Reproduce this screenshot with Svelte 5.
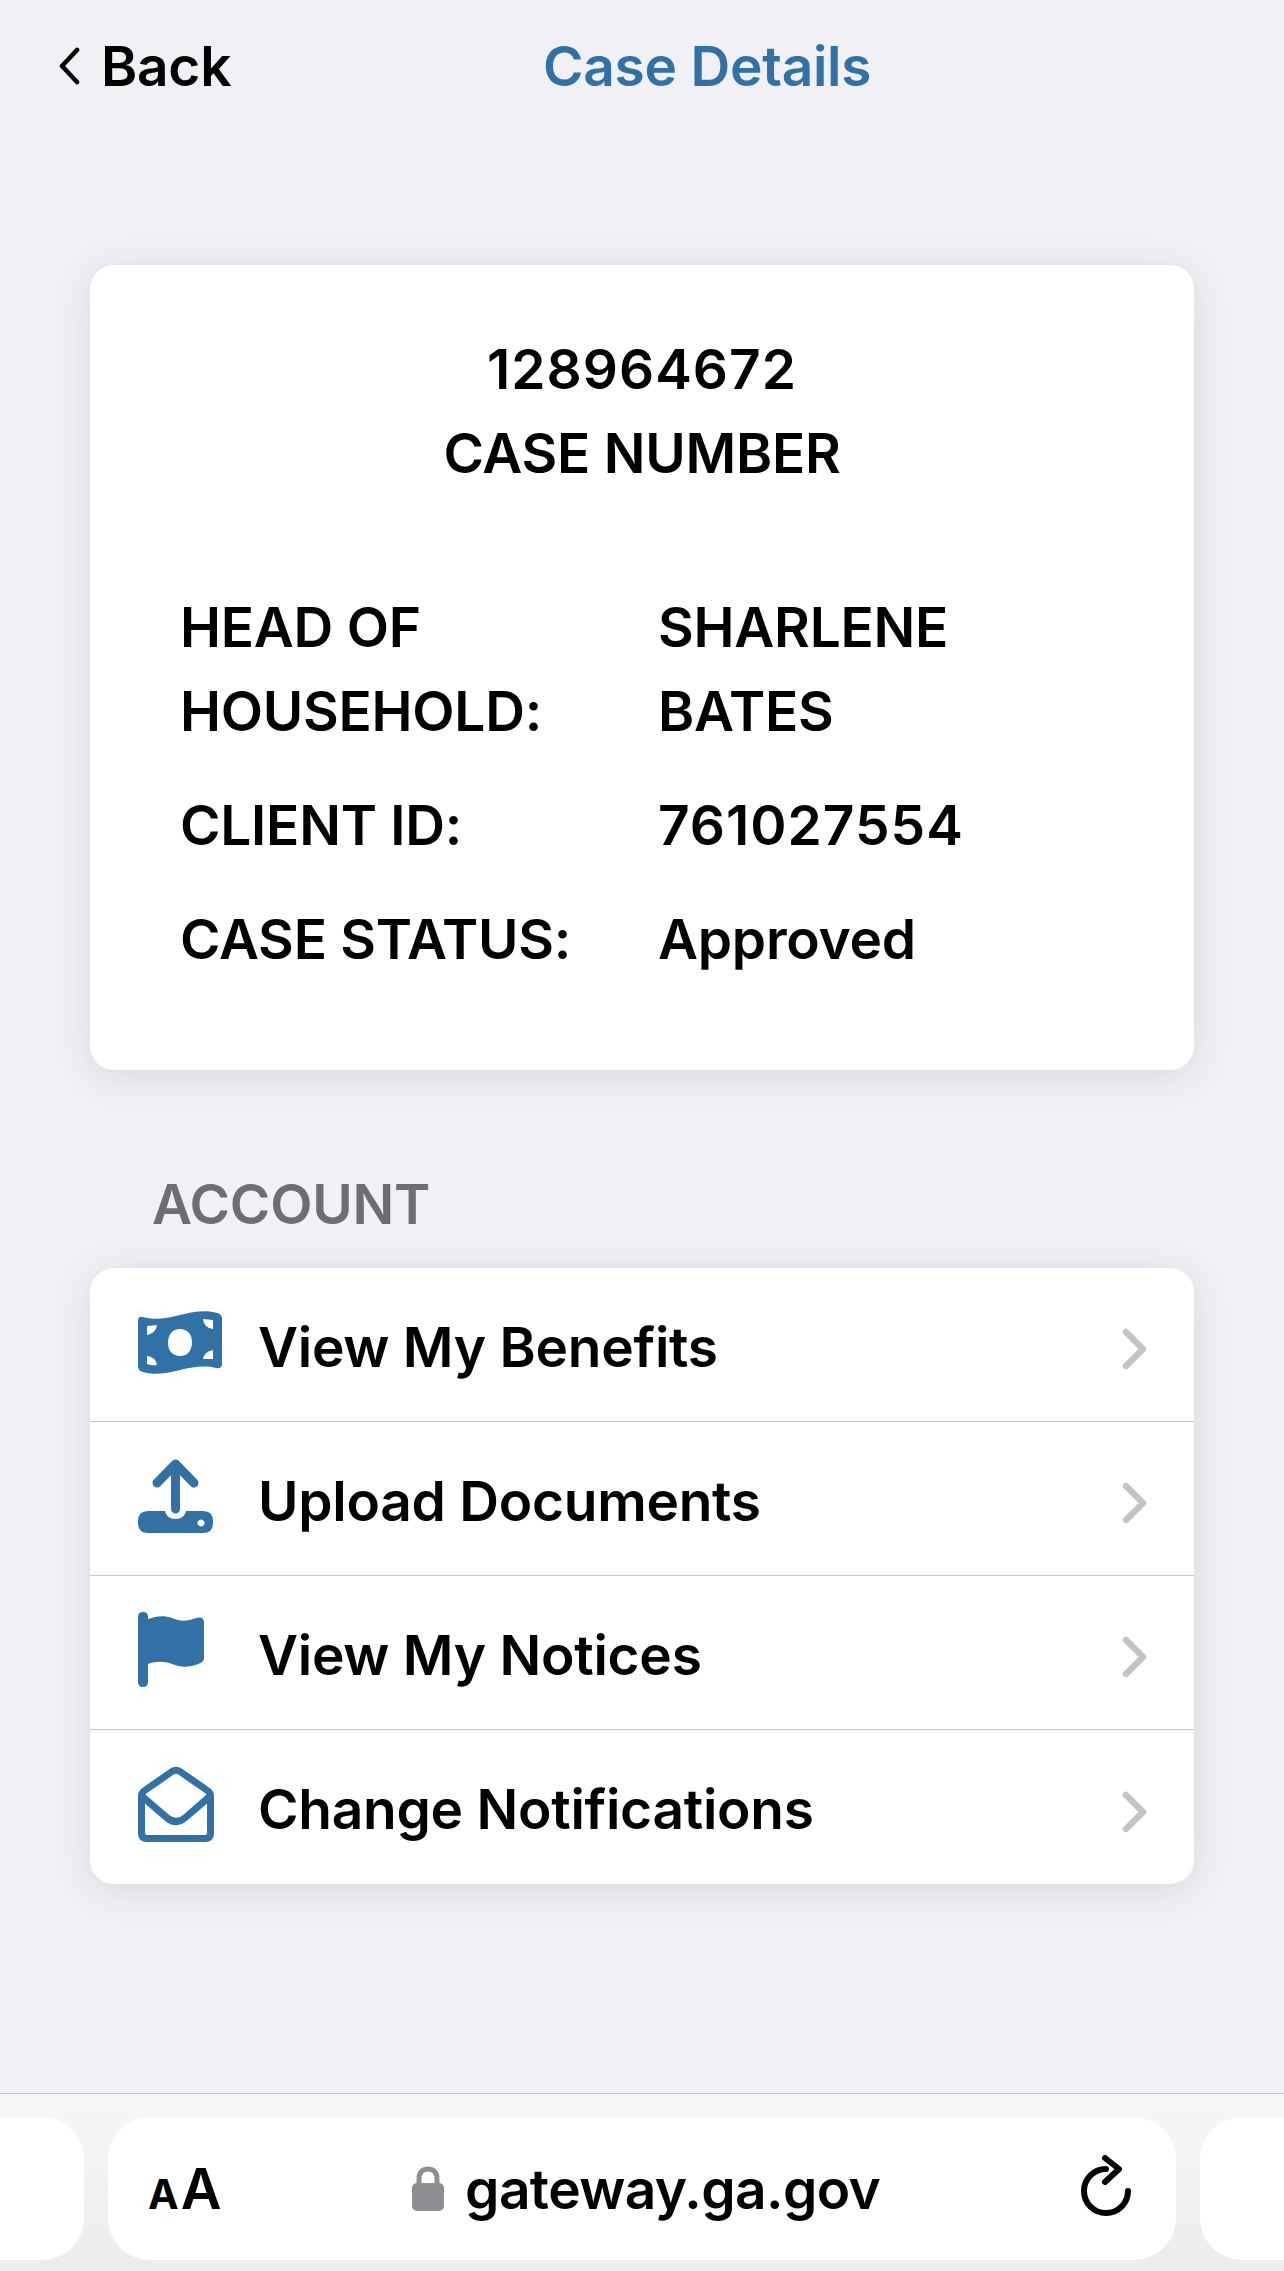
<script>
    const details = [
        { label: "HEAD OF HOUSEHOLD:", value: "SHARLENE BATES" },
        { label: "CLIENT ID:", value: "761027554", num: true },
        { label: "CASE STATUS:", value: "Approved" },
    ];

    const links = [
        { icon: "money", text: "View My Benefits" },
        { icon: "upload", text: "Upload Documents" },
        { icon: "flag", text: "View My Notices" },
        { icon: "mail", text: "Change Notifications" },
    ];
</script>

<div class="page">
    <header class="nav">
        <div class="back">
            <svg class="back-icon" viewBox="0 0 22 38" width="22" height="38">
                <path d="M19 3 L4 19 L19 35" fill="none" stroke="#000" stroke-width="4.6" stroke-linecap="round" stroke-linejoin="round" />
            </svg>
            <span>Back</span>
        </div>
        <h1>Case Details</h1>
    </header>

    <section class="card summary">
        <div class="case-no">
            <div class="num">128964672</div>
            <div>CASE NUMBER</div>
        </div>
        <dl>
            {#each details as d}
                <dt>{d.label}</dt>
                <dd class:num={d.num}>{d.value}</dd>
            {/each}
        </dl>
    </section>

    <h2>ACCOUNT</h2>

    <section class="card list">
        {#each links as link}
            <div class="row">
                <span class="row-icon">
                    {#if link.icon === "money"}
                        <svg viewBox="0 0 84 66" width="84" height="66">
                            <path fill="#3271a5" fill-rule="evenodd" d="M5 8 C16 11 27 10 42 6 C56 2 70 1 79 4 Q84 5 84 10 L84 55 Q84 60 78 59 C67 56 55 58 42 61 C28 65 14 66 5 63 Q0 62 0 57 L0 12 Q0 7 5 8 Z M42 20 C34 20 30 26 30 34 C30 42 35 47 42 47 C50 47 54 41 54 33 C54 25 49 20 42 20 Z M9 17 L19 16 Q18 24 9 26 Z M65 10 L75 11 L75 20 Q66 19 65 10 Z M9 47 Q18 48 19 56 Q14 57 9 55 Z M75 41 L75 50 L65 50 Q66 43 75 41 Z" />
                        </svg>
                    {:else if link.icon === "upload"}
                        <svg viewBox="0 0 75 74" width="75" height="74">
                            <path d="M37.500 50 L37.500 5 M19 24 L37.500 5 L56 24" fill="none" stroke="#3271a5" stroke-width="9" stroke-linecap="round" stroke-linejoin="round" />
                            <path fill="#3271a5" fill-rule="evenodd" d="M10 52 L27 52 C28 57 32 60 37.500 60 C43 60 47 57 48 52 L65 52 Q75 52 75 62 L75 64 Q75 74 65 74 L10 74 Q0 74 0 64 L0 62 Q0 52 10 52 Z M63 60.500 a3.500 3.500 0 1 0 0.01 0 Z" />
                        </svg>
                    {:else if link.icon === "flag"}
                        <svg viewBox="0 0 66 75" width="66" height="75">
                            <path fill="#3271a5" d="M5 0 Q10 0 10 5 L10 7 C18 4 26 3 34 6 C43 10 50 9 58 6 Q66 4 66 11 L66 46 Q66 50 60 52 C50 56 42 55 34 52 C26 49 18 49 10 52 L10 70 Q10 75 5 75 Q0 75 0 70 L0 5 Q0 0 5 0 Z" />
                        </svg>
                    {:else}
                        <svg viewBox="0 0 76 76" width="76" height="76">
                            <path fill="none" stroke="#3271a5" stroke-width="7" stroke-linejoin="round" d="M3.5 30 Q3.5 27 6 25 L34 5.5 Q38 3 42 5.5 L70 25 Q72.500 27 72.500 30 L72.500 67 Q72.500 72.500 67 72.500 L9 72.500 Q3.500 72.500 3.500 67 Z" />
                            <path fill="none" stroke="#3271a5" stroke-width="7" stroke-linecap="round" d="M6 32 L28 51 Q38 60 48 51 L70 32" />
                        </svg>
                    {/if}
                </span>
                <span class="row-text">{link.text}</span>
                <svg class="chev" viewBox="0 0 26 42" width="26" height="42">
                    <path d="M4 4 L21 21 L4 38" fill="none" stroke="#c4c4c6" stroke-width="6.500" stroke-linecap="round" stroke-linejoin="round" />
                </svg>
            </div>
        {/each}
    </section>

    <div class="spacer"></div>

    <footer class="browser">
        <div class="pill side"></div>
        <div class="pill main">
            <span class="aa"><small>A</small>A</span>
            <span class="url">
                <svg viewBox="0 0 32 45" width="32" height="45">
                    <path fill="none" stroke="#8e8e93" stroke-width="5" d="M7 20 L7 13 C7 6 11 3 16 3 C21 3 25 6 25 13 L25 20" />
                    <rect x="0" y="17" width="32" height="28" rx="5" fill="#8e8e93" />
                </svg>
                gateway.ga.gov
            </span>
            <svg class="reload" viewBox="0 0 52 62" width="52" height="62">
                <path fill="none" stroke="#000" stroke-width="6" stroke-linecap="round" stroke-linejoin="round" d="M26 14 A22 22 0 1 0 48 36 M25 3 L39 14 L25 27" />
            </svg>
        </div>
        <div class="pill side"></div>
    </footer>
</div>

<style>
    :global(body) {
        margin: 0;
        background: #f0f0f5;
    }

    .page {
        width: 1284px;
        height: 2271px;
        display: flex;
        flex-direction: column;
        background: #f0f0f5;
        color: #000;
        font-family: Inter, "Liberation Sans", sans-serif;
        font-size: 55px;
        font-weight: 600;
        letter-spacing: -0.25px;
        overflow: hidden;
    }

    .nav {
        height: 130px;
        padding: 1px 0 0 58px;
        display: flex;
        align-items: center;
        box-sizing: border-box;
        flex-shrink: 0;
    }

    .back {
        display: flex;
        align-items: center;
        gap: 21px;
        width: 485px;
    }

    .back-icon {
        flex-shrink: 0;
    }

    h1 {
        margin: 0;
        font-size: inherit;
        font-weight: inherit;
        color: #3271a5;
    }

    .card {
        margin: 0 90px;
        background: #fff;
        border-radius: 24px;
        box-shadow: 0 6px 40px rgba(40, 40, 60, 0.12);
    }

    .summary {
        margin-top: 135px;
        height: 805px;
        padding: 62px 90px 0;
        box-sizing: border-box;
        line-height: 84px;
    }

    .case-no {
        text-align: center;
        margin-bottom: 90px;
    }

    .num {
        letter-spacing: 1px;
    }

    dl {
        margin: 0;
        display: grid;
        grid-template-columns: 478px 1fr;
        row-gap: 30px;
    }

    dd {
        margin: 0;
        width: 330px;
    }

    dt {
        width: 420px;
    }

    h2 {
        margin: 92px 0 0 152px;
        height: 106px;
        box-sizing: border-box;
        font-size: inherit;
        font-weight: inherit;
        line-height: 84px;
        color: #6d6d72;
    }

    .row {
        height: 154px;
        display: flex;
        align-items: center;
        padding: 0 46px 0 48px;
        box-sizing: border-box;
        border-bottom: 1px solid #c8c8cb;
    }

    .row:last-child {
        border-bottom: 0;
    }

    .row-icon {
        width: 120px;
        display: flex;
        flex-shrink: 0;
        margin-bottom: 6px;
    }

    .row-text {
        flex: 1;
        padding-top: 4px;
    }

    .chev {
        margin-top: 9px;
    }

    .spacer {
        flex: 1;
    }

    .browser {
        height: 178px;
        flex-shrink: 0;
        box-sizing: border-box;
        border-top: 1px solid #c0c0c4;
        background: linear-gradient(#f7f7f9, #ececee);
        padding: 23px 0 11px;
        display: flex;
        justify-content: center;
        gap: 24px;
    }

    .pill {
        background: #fff;
        border-radius: 42px;
        height: 143px;
        flex-shrink: 0;
    }

    .side {
        width: 300px;
    }

    .main {
        width: 1068px;
        display: flex;
        align-items: center;
        justify-content: space-between;
        padding: 0 44px 0 40px;
        box-sizing: border-box;
    }

    .aa {
        font-size: 56px;
        font-weight: 600;
        line-height: 1;
        letter-spacing: 0;
    }

    .aa small {
        font-size: 41px;
        font-weight: 700;
        margin-right: 2px;
    }

    .url {
        display: flex;
        align-items: center;
        gap: 21px;
        margin-right: 9px;
        letter-spacing: -0.6px;
    }

    .reload {
        margin-bottom: 5px;
    }
</style>
